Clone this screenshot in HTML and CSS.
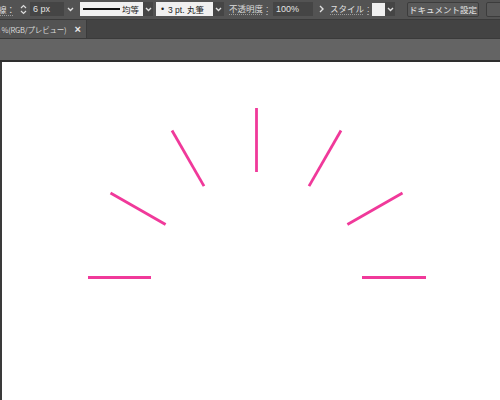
FILE: index.html
```html
<!DOCTYPE html>
<html>
<head>
<meta charset="utf-8">
<link rel="stylesheet" href="styles.css">
</head>
<body>
<div class="toolbar">
  <span class="label lbl-stroke">線：</span>
  <span class="spin">
    <svg width="7" height="11" viewBox="0 0 7 11"><path d="M1 4 L3.5 1.5 L6 4 M1 7 L3.5 9.5 L6 7" fill="none" stroke="#dcdcdc" stroke-width="1.2"/></svg>
  </span>
  <span class="input w-px">6 px</span>
  <span class="chev c-px"><svg width="7" height="5" viewBox="0 0 7 5"><path d="M1 1 L3.5 3.5 L6 1" fill="none" stroke="#e0e0e0" stroke-width="1.4"/></svg></span>
  <span class="white w-profile"><span class="stroke-line"></span><span class="wtext">均等</span></span>
  <span class="chev dark c-prof"><svg width="7" height="5" viewBox="0 0 7 5"><path d="M1 1 L3.5 3.5 L6 1" fill="none" stroke="#e0e0e0" stroke-width="1.4"/></svg></span>
  <span class="white w-brush"><span class="dot">•</span><span class="wtext">3 pt. 丸筆</span></span>
  <span class="chev dark c-brush"><svg width="7" height="5" viewBox="0 0 7 5"><path d="M1 1 L3.5 3.5 L6 1" fill="none" stroke="#e0e0e0" stroke-width="1.4"/></svg></span>
  <span class="label lbl-op">不透明度<span class="colon">:</span></span>
  <span class="input w-op">100%</span>
  <span class="arrow"><svg width="5" height="8" viewBox="0 0 5 8"><path d="M1 1 L4 4 L1 7" fill="none" stroke="#e0e0e0" stroke-width="1.4"/></svg></span>
  <span class="label lbl-style">スタイル<span class="colon">:</span></span>
  <span class="swatch"></span>
  <span class="chev dark c-sw"><svg width="7" height="5" viewBox="0 0 7 5"><path d="M1 1 L3.5 3.5 L6 1" fill="none" stroke="#e0e0e0" stroke-width="1.4"/></svg></span>
  <span class="btn">ドキュメント設定</span>
  <span class="btn btn-cut"></span>
</div>
<div class="tabbar">
  <div class="tab"><span class="tabtext">a %(RGB/プレビュー)</span><span class="close">×</span></div>
</div>
<div class="strip"></div>
<div class="canvas">
  <svg width="498" height="338" viewBox="0 0 498 338">
    <g stroke="#f0399a" stroke-width="2.8" stroke-linecap="butt">
      <line x1="86" y1="215.5" x2="149" y2="215.5"/>
      <line x1="108.5" y1="131" x2="163.6" y2="162.5"/>
      <line x1="170" y1="68.5" x2="202" y2="124.1"/>
      <line x1="254.5" y1="46" x2="254.5" y2="110"/>
      <line x1="339" y1="68.5" x2="307" y2="124.1"/>
      <line x1="400.5" y1="131" x2="345.4" y2="162.5"/>
      <line x1="360" y1="215.5" x2="424" y2="215.5"/>
    </g>
  </svg>
</div>
</body>
</html>
```

FILE: styles.css
```css
* { box-sizing: border-box; }
html, body { margin: 0; padding: 0; }
body {
  width: 500px;
  height: 400px;
  overflow: hidden;
  background: #535353;
  font-family: "Noto Sans CJK JP", "Liberation Sans", sans-serif;
  font-size: 8.5px;
  color: #dcdcdc;
}
.toolbar {
  height: 19px;
  display: flex;
  align-items: center;
  background: #535353;
  white-space: nowrap;
  padding-bottom: 1px;
}
.toolbar > span { flex: none; }
.label {
  line-height: 13px;
  color: #dedede;
  text-decoration: underline dotted #9a9a9a;
  text-underline-offset: 2px;
}
.colon { margin-left: 3px; font-family: "Liberation Sans", sans-serif; }
.lbl-stroke { margin-left: -2px; width: 16px; overflow: hidden; }
.spin { margin-left: 6px; width: 8px; height: 14px; display: flex; align-items: center; }
.input {
  height: 14px;
  background: #454545;
  color: #e2e2e2;
  font-family: "Liberation Sans", sans-serif;
  font-size: 9px;
  line-height: 14px;
  padding-left: 3px;
}
.w-px { margin-left: 2px; width: 34px; }
.chev {
  width: 12px;
  height: 14px;
  display: flex;
  align-items: center;
  justify-content: center;
}
.chev.dark { background: #454545; }
.white {
  height: 14px;
  background: #f0f0f0;
  color: #222;
  display: flex;
  align-items: center;
}
.w-profile { margin-left: 4px; width: 63px; padding-left: 3px; }
.c-prof { width: 10px; }
.stroke-line { width: 37px; height: 2px; background: #111; }
.wtext { margin-left: 2px; font-size: 8.5px; }
.w-brush { margin-left: 3px; width: 57px; padding-left: 5px; }
.dot { font-size: 9px; width: 6px; font-family: "Liberation Sans", sans-serif; }
.w-brush .wtext { margin-left: 1px; font-family: "Liberation Sans", "Noto Sans CJK JP", sans-serif; }
.c-brush { width: 11px; }
.lbl-op { margin-left: 5px; width: 44px; }
.w-op { width: 40px; }
.arrow { margin-left: 3px; width: 10px; display: flex; align-items: center; justify-content: center; }
.lbl-style { margin-left: 4px; width: 42px; }
.swatch { width: 13px; height: 13px; background: #efefef; }
.c-sw { width: 10px; }
.btn {
  margin-left: 12px;
  height: 15px;
  width: 72px;
  border: 1px solid #3c3c3c;
  border-radius: 2px;
  background: #595959;
  color: #e4e4e4;
  font-size: 8.5px;
  line-height: 13px;
  text-align: center;
}
.btn-cut { margin-left: 7px; width: 20px; }
.tabbar {
  height: 20px;
  background: #434343;
  border-top: 1px solid #3a3a3a;
  border-bottom: 1px solid #3a3a3a;
  display: flex;
}
.tab {
  width: 87px;
  background: #535353;
  display: flex;
  align-items: center;
  border-right: 1px solid #3a3a3a;
}
.tabtext {
  margin-left: -4px;
  font-size: 7.5px;
  letter-spacing: -0.2px;
  color: #d8d8d8;
  white-space: nowrap;
}
.close {
  margin-left: auto;
  margin-right: 5px;
  font-size: 11px;
  font-weight: bold;
  color: #e8e8e8;
  font-family: "Liberation Sans", sans-serif;
  line-height: 11px;
}
.strip {
  height: 23px;
  background: #646464;
  border-bottom: 2px solid #2e2e2e;
}
.canvas {
  height: 338px;
  background: #ffffff;
  border-left: 2px solid #3a3a3a;
}
.canvas svg { display: block; }
```
